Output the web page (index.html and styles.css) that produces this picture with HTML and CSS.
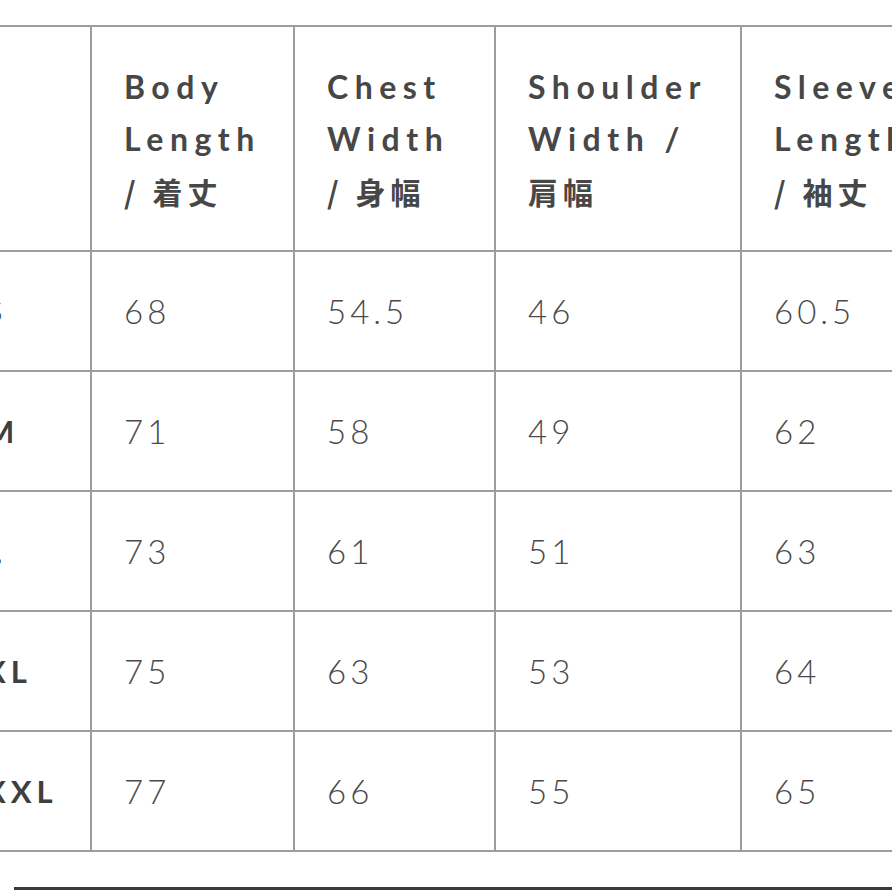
FILE: index.html
```html
<!DOCTYPE html>
<html lang="en">
<head>
<meta charset="utf-8">
<title>Size Chart</title>
<link rel="stylesheet" href="styles.css">
</head>
<body>
<div class="viewport">
  <div class="chart">
    <div class="cell head"></div>
    <div class="cell head"><div class="label">Body<br>Length<br><span class="cjk">/ 着丈</span></div></div>
    <div class="cell head"><div class="label">Chest<br>Width<br><span class="cjk">/ 身幅</span></div></div>
    <div class="cell head"><div class="label">Shoulder<br>Width /<br><span class="cjk">肩幅</span></div></div>
    <div class="cell head"><div class="label">Sleeve<br>Length<br><span class="cjk">/ 袖丈</span></div></div>

    <div class="cell size">S</div>
    <div class="cell num">68</div>
    <div class="cell num">54.5</div>
    <div class="cell num">46</div>
    <div class="cell num">60.5</div>

    <div class="cell size">M</div>
    <div class="cell num">71</div>
    <div class="cell num">58</div>
    <div class="cell num">49</div>
    <div class="cell num">62</div>

    <div class="cell size">L</div>
    <div class="cell num">73</div>
    <div class="cell num">61</div>
    <div class="cell num">51</div>
    <div class="cell num">63</div>

    <div class="cell size">XL</div>
    <div class="cell num">75</div>
    <div class="cell num">63</div>
    <div class="cell num">53</div>
    <div class="cell num">64</div>

    <div class="cell size">XXL</div>
    <div class="cell num">77</div>
    <div class="cell num">66</div>
    <div class="cell num">55</div>
    <div class="cell num">65</div>
  </div>
  <div class="rule"></div>
</div>
</body>
</html>
```
FILE: styles.css
```css
html, body {
  margin: 0;
  padding: 0;
  background: #ffffff;
}

.viewport {
  width: 892px;
  height: 892px;
  overflow: hidden;
  background: #ffffff;
}

.chart {
  display: grid;
  grid-template-columns: 136px 201px 199px 244px 250px;
  grid-template-rows: 223px 118px 118px 118px 118px 118px;
  gap: 2px;
  padding: 2px;
  background: #9d9d9d;
  margin: 25px 0 0 -48px;
  width: max-content;
}

.cell {
  background: #ffffff;
  display: flex;
  align-items: center;
  padding-left: 34px;
  color: #474747;
  white-space: nowrap;
}

.head {
  font-family: "Lato", "Noto Sans CJK JP", sans-serif;
  font-weight: 700;
  font-size: 32px;
  line-height: 52px;
  letter-spacing: 6.5px;
  padding-left: 32px;
  padding-top: 2px;
}

.cjk {
  font-family: "Noto Sans CJK JP", sans-serif;
  font-weight: 700;
  font-size: 30px;
  letter-spacing: 5px;
}

.size {
  font-family: "Lato", sans-serif;
  font-weight: 700;
  font-size: 31px;
  letter-spacing: 5px;
  color: #3f3f3f;
  padding-left: 31px;
}

.num {
  font-family: "Lato", sans-serif;
  font-weight: 300;
  font-size: 33px;
  letter-spacing: 4px;
  color: #4a4a4a;
  padding-left: 32px;
}

.rule {
  margin: 35px 0 0 14px;
  height: 3px;
  background: #3a3a3a;
}
```
